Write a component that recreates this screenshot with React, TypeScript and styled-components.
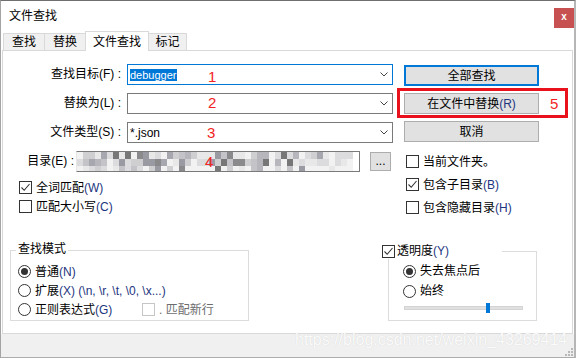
import React from "react";
import styled, { createGlobalStyle } from "styled-components";

const GlobalStyle = createGlobalStyle`
  html, body { margin: 0; padding: 0; background: #fff; }
  body {
    font-family: "Liberation Sans", "Noto Sans CJK SC", sans-serif;
    font-size: 12px;
    color: #000;
  }
  * { box-sizing: border-box; }
`;

const Window = styled.div`
  position: relative;
  width: 576px;
  height: 358px;
  background: #fff;
  border-top: 1px solid #6f6f6f;
  border-left: 1px solid #a4a4a4;
  border-right: 2px solid #b6b6b6;
  border-bottom: 1px solid #acacac;
  display: flex;
  flex-direction: column;
  overflow: hidden;
`;

const TitleBar = styled.div`
  height: 30px;
  flex: none;
  display: flex;
  align-items: flex-start;
  padding: 7px 0 0 8px;
`;

const Title = styled.div`
  line-height: 16px;
  font-size: 12px;
  color: #000;
`;

const CloseBtn = styled.div`
  margin-left: auto;
  width: 20px;
  height: 20px;
  background: #c75050;
  color: #fff;
  font-weight: bold;
  font-size: 10px;
  line-height: 18px;
  text-align: center;
`;

const TabStrip = styled.div`
  position: relative;
  z-index: 1;
  height: 19px;
  flex: none;
  display: flex;
  align-items: flex-end;
  padding-left: 2px;
`;

const Tab = styled.div<{ $active?: boolean; $w: number }>`
  position: relative;
  z-index: ${(p) => (p.$active ? 2 : 1)};
  width: ${(p) => p.$w}px;
  height: ${(p) => (p.$active ? 20 : 17)}px;
  margin-right: -1px;
  margin-bottom: ${(p) => (p.$active ? -1 : 0)}px;
  border: 1px solid #d9d9d9;
  border-bottom: none;
  background: ${(p) => (p.$active ? "#fff" : "#f0f0f0")};
  display: flex;
  align-items: center;
  justify-content: center;
  font-size: 12px;
  line-height: 14px;
`;

const Panel = styled.div`
  flex: none;
  margin-left: 1px;
  width: 571px;
  height: 284px;
  border: 1px solid #d9d9d9;
  background: #fff;
  padding-top: 13px;
  display: flex;
  flex-direction: column;
`;

const TopArea = styled.div`
  display: flex;
  align-items: flex-start;
`;

const LeftCol = styled.div`
  width: 390px;
  display: flex;
  flex-direction: column;
`;

const FieldRow = styled.div`
  display: grid;
  grid-template-columns: 118px 266px;
  column-gap: 6px;
  height: 21px;
  margin-bottom: 8px;
`;

const Label = styled.div`
  text-align: right;
  line-height: 21px;
  white-space: nowrap;
`;

const Combo = styled.div<{ $focused?: boolean }>`
  position: relative;
  height: 21px;
  border: 1px solid ${(p) => (p.$focused ? "#0078d7" : "#7a7a7a")};
  background: #fff;
  display: flex;
  align-items: center;
  padding-left: 2px;
`;

const ComboText = styled.span`
  line-height: 14px;
  white-space: nowrap;
`;

const SelText = styled.span`
  background: #0078d7;
  color: #fff;
  font-size: 11px;
  line-height: 12px;
`;

const ChevronWrap = styled.span`
  margin-left: auto;
  margin-right: 4px;
  display: flex;
`;

const Num = styled.span<{ $left: number; $top: number }>`
  position: absolute;
  left: ${(p) => p.$left}px;
  top: ${(p) => p.$top}px;
  font-family: "Liberation Sans", sans-serif;
  font-size: 15px;
  line-height: 15px;
  color: #f22424;
`;

const DirRow = styled.div`
  display: flex;
  align-items: center;
  height: 21px;
`;

const DirLabel = styled.div`
  width: 71px;
  margin-right: 2px;
  text-align: right;
  line-height: 21px;
  white-space: nowrap;
`;

const DirField = styled.div`
  position: relative;
  width: 284px;
  height: 21px;
  border: 1px solid #7a7a7a;
  border-left-color: #e6e6e6;
  background: #fff;
  display: flex;
  align-items: flex-start;
  overflow: hidden;
`;

const SmallBtn = styled.button`
  margin-left: 10px;
  width: 21px;
  height: 19px;
  padding: 0 0 3px;
  border: 1px solid #adadad;
  background: #e1e1e1;
  font: inherit;
  font-size: 12px;
  line-height: 12px;
  display: flex;
  align-items: flex-end;
  justify-content: center;
`;

const CheckList = styled.div<{ $top: number; $left: number }>`
  margin-top: ${(p) => p.$top}px;
  padding-left: ${(p) => p.$left}px;
  display: flex;
  flex-direction: column;
`;

const Option = styled.div<{ $h: number; $w?: number; $muted?: boolean }>`
  display: flex;
  align-items: center;
  gap: 4px;
  height: ${(p) => p.$h}px;
  ${(p) => (p.$w ? `width: ${p.$w}px;` : "")}
  white-space: nowrap;
  line-height: 14px;
  color: ${(p) => (p.$muted ? "#6d6d6d" : "#000")};
`;

const Box = styled.span<{ $disabled?: boolean }>`
  flex: none;
  width: 13px;
  height: 13px;
  border: 1px solid ${(p) => (p.$disabled ? "#c6c6c6" : "#333")};
  background: #fff;
  display: inline-flex;
  align-items: center;
  justify-content: center;
`;

const RadioCircle = styled.span<{ $on?: boolean }>`
  flex: none;
  width: 13px;
  height: 13px;
  border-radius: 50%;
  border: 1px solid #333;
  background: #fff;
  display: inline-flex;
  align-items: center;
  justify-content: center;
  &::after {
    content: "";
    width: 7px;
    height: 7px;
    border-radius: 50%;
    background: ${(p) => (p.$on ? "#333" : "transparent")};
  }
`;

const Mn = styled.span`
  color: #1d3580;
`;

const RightCol = styled.div`
  margin-left: 11px;
  margin-top: 1px;
  width: 135px;
  display: flex;
  flex-direction: column;
`;

const ButtonStack = styled.div`
  display: flex;
  flex-direction: column;
  gap: 7px;
`;

const Btn = styled.button<{ $focused?: boolean }>`
  height: 21px;
  padding: 0;
  margin: 0;
  background: #e1e1e1;
  border: ${(p) => (p.$focused ? "2px solid #0078d7" : "1px solid #adadad")};
  font: inherit;
  font-size: 12px;
  line-height: 14px;
  color: #000;
  display: flex;
  align-items: center;
  justify-content: center;
`;

const Annotated = styled.div`
  position: relative;
  display: flex;
  flex-direction: column;
`;

const RedFrame = styled.div`
  position: absolute;
  left: -7px;
  top: -5px;
  width: 171px;
  height: 30px;
  border: 3px solid #e8111c;
  pointer-events: none;
`;

const BottomArea = styled.div`
  margin-top: 31px;
  display: flex;
  align-items: flex-start;
`;

const Group = styled.div<{ $ml: number; $mt: number; $w: number; $h: number; $pt: number; $pl: number }>`
  position: relative;
  margin-left: ${(p) => p.$ml}px;
  margin-top: ${(p) => p.$mt}px;
  width: ${(p) => p.$w}px;
  height: ${(p) => p.$h}px;
  border: 1px solid #dcdcdc;
  padding: ${(p) => p.$pt}px 0 0 ${(p) => p.$pl}px;
  display: flex;
  flex-direction: column;
`;

const Legend = styled.div<{ $left: number; $top: number; $w?: number }>`
  position: absolute;
  left: ${(p) => p.$left}px;
  top: ${(p) => p.$top}px;
  ${(p) => (p.$w ? `width: ${p.$w}px;` : "")}
  height: 15px;
  padding: 0 2px;
  background: #fff;
  display: flex;
  align-items: center;
  gap: 2px;
  line-height: 15px;
  white-space: nowrap;
`;

const Row = styled.div`
  display: flex;
  align-items: center;
`;

const Slider = styled.div`
  margin-left: 1px;
  padding-top: 5px;
  height: 12px;
`;

const Track = styled.div`
  position: relative;
  width: 119px;
  height: 4px;
  background: #e0e0e0;
  border: 1px solid #d4d4d4;
`;

const Thumb = styled.div`
  position: absolute;
  left: 81px;
  top: -4px;
  width: 4px;
  height: 10px;
  background: #0078d7;
`;

const StatusBar = styled.div`
  position: relative;
  flex: none;
  height: 23px;
  background: #f0f0f0;
`;

const Grip = styled.svg`
  position: absolute;
  right: 1px;
  bottom: 1px;
`;

const Watermark = styled.div`
  position: absolute;
  left: 294px;
  top: 330px;
  font-family: "Liberation Sans", sans-serif;
  font-size: 16px;
  line-height: 18px;
  color: #fbfbfb;
  text-shadow: 0 0 1px #cfcfcf;
  white-space: nowrap;
  pointer-events: none;
`;

const Chevron = () => (
  <ChevronWrap>
    <svg width="8" height="5" viewBox="0 0 8 5">
      <polyline points="0.5,0.5 4,4 7.5,0.5" fill="none" stroke="#454545" strokeWidth="1" />
    </svg>
  </ChevronWrap>
);

const Tick = () => (
  <svg width="11" height="11" viewBox="0 0 11 11">
    <polyline points="1.5,5.5 4.2,8.3 9.5,2" fill="none" stroke="#333" strokeWidth="1.1" />
  </svg>
);

const Check = ({ on, disabled }: { on?: boolean; disabled?: boolean }) => (
  <Box $disabled={disabled}>{on ? <Tick /> : null}</Box>
);

const palette = [
  "#f2f2f2",
  "#e8e8e8",
  "#dcdcde",
  "#cfcfd2",
  "#c3c3c8",
  "#b6b6bc",
  "#a7a7b0",
  "#9a9aa3",
  "#8a8a8c",
  "#777777",
];

const mosaicCells = (() => {
  let s = 20240611;
  const rnd = () => {
    s = (s * 1103515245 + 12345) & 0x7fffffff;
    return s / 0x7fffffff;
  };
  const cells: { x: number; y: number; w: number; h: number; c: string }[] = [];
  const rows = [
    { y: 0, h: 7, bias: 1.3 },
    { y: 7, h: 7, bias: 1.0 },
    { y: 14, h: 6, bias: 3.0 },
  ];
  rows.forEach((r) => {
    for (let c = 0; c < 46; c++) {
      let v = Math.pow(rnd(), r.bias);
      if (c > 40) v *= 0.4;
      if (c < 2) v *= 0.5;
      const idx = Math.min(palette.length - 1, Math.floor(v * palette.length));
      cells.push({ x: c * 6, y: r.y, w: 6, h: r.h, c: palette[idx] });
    }
  });
  return cells;
})();

const Mosaic = () => (
  <svg width="276" height="19" viewBox="0 0 276 19">
    {mosaicCells.map((m, i) => (
      <rect key={i} x={m.x} y={m.y} width={m.w} height={m.h} fill={m.c} />
    ))}
  </svg>
);

export default function App() {
  return (
    <>
      <GlobalStyle />
      <Window>
        <TitleBar>
          <Title>文件查找</Title>
          <CloseBtn>x</CloseBtn>
        </TitleBar>

        <TabStrip>
          <Tab $w={42}>查找</Tab>
          <Tab $w={42}>替换</Tab>
          <Tab $w={64} $active>
            文件查找
          </Tab>
          <Tab $w={39}>标记</Tab>
        </TabStrip>

        <Panel>
          <TopArea>
            <LeftCol>
              <FieldRow>
                <Label>查找目标(F) :</Label>
                <Combo $focused>
                  <SelText>debugger</SelText>
                  <Num $left={80} $top={4}>1</Num>
                  <Chevron />
                </Combo>
              </FieldRow>
              <FieldRow>
                <Label>替换为(L) :</Label>
                <Combo>
                  <Num $left={80} $top={1}>2</Num>
                  <Chevron />
                </Combo>
              </FieldRow>
              <FieldRow>
                <Label>文件类型(S) :</Label>
                <Combo>
                  <ComboText>*.json</ComboText>
                  <Num $left={79} $top={2}>3</Num>
                  <Chevron />
                </Combo>
              </FieldRow>
              <DirRow>
                <DirLabel>目录(E) :</DirLabel>
                <DirField>
                  <Mosaic />
                  <Num $left={128} $top={2}>4</Num>
                </DirField>
                <SmallBtn>...</SmallBtn>
              </DirRow>
              <CheckList $top={6} $left={16}>
                <Option $h={19}>
                  <Check on />
                  <span>
                    全词匹配<Mn>(W)</Mn>
                  </span>
                </Option>
                <Option $h={19}>
                  <Check />
                  <span>
                    匹配大小写<Mn>(C)</Mn>
                  </span>
                </Option>
              </CheckList>
            </LeftCol>

            <RightCol>
              <ButtonStack>
                <Btn $focused>全部查找</Btn>
                <Annotated>
                  <Btn>
                    在文件中替换<Mn>(R)</Mn>
                  </Btn>
                  <RedFrame>
                    <Num $left={150} $top={5}>5</Num>
                  </RedFrame>
                </Annotated>
                <Btn>取消</Btn>
              </ButtonStack>
              <CheckList $top={8} $left={2}>
                <Option $h={23}>
                  <Check />
                  <span>当前文件夹。</span>
                </Option>
                <Option $h={23}>
                  <Check on />
                  <span>
                    包含子目录<Mn>(B)</Mn>
                  </span>
                </Option>
                <Option $h={23}>
                  <Check />
                  <span>
                    包含隐藏目录<Mn>(H)</Mn>
                  </span>
                </Option>
              </CheckList>
            </RightCol>
          </TopArea>

          <BottomArea>
            <Group $ml={7} $mt={0} $w={239} $h={71} $pt={11} $pl={7}>
              <Legend $left={5} $top={-9}>
                查找模式
              </Legend>
              <Option $h={19}>
                <RadioCircle $on />
                <span>
                  普通<Mn>(N)</Mn>
                </span>
              </Option>
              <Option $h={19}>
                <RadioCircle />
                <span>
                  扩展<Mn>{"(X) (\\n, \\r, \\t, \\0, \\x...)"}</Mn>
                </span>
              </Option>
              <Row>
                <Option $h={19} $w={124}>
                  <RadioCircle />
                  <span>
                    正则表达式<Mn>(G)</Mn>
                  </span>
                </Option>
                <Option $h={19} $muted>
                  <Check disabled />
                  <span>. 匹配新行</span>
                </Option>
              </Row>
            </Group>

            <Group $ml={139} $mt={1} $w={149} $h={70} $pt={9} $pl={14}>
              <Legend $left={-9} $top={-8} $w={122}>
                <Check on />
                <span>
                  透明度<Mn>(Y)</Mn>
                </span>
              </Legend>
              <Option $h={20}>
                <RadioCircle $on />
                <span>失去焦点后</span>
              </Option>
              <Option $h={20}>
                <RadioCircle />
                <span>始终</span>
              </Option>
              <Slider>
                <Track>
                  <Thumb />
                </Track>
              </Slider>
            </Group>
          </BottomArea>
        </Panel>

        <StatusBar>
          <Grip width="9" height="9" viewBox="0 0 9 9">
            <rect x="7" y="1" width="2" height="2" fill="#b8b8b8" />
            <rect x="4" y="4" width="2" height="2" fill="#b8b8b8" />
            <rect x="7" y="4" width="2" height="2" fill="#b8b8b8" />
            <rect x="1" y="7" width="2" height="2" fill="#b8b8b8" />
            <rect x="4" y="7" width="2" height="2" fill="#b8b8b8" />
            <rect x="7" y="7" width="2" height="2" fill="#b8b8b8" />
          </Grip>
        </StatusBar>

        <Watermark>https://blog.csdn.net/weixin_43269414</Watermark>
      </Window>
    </>
  );
}
